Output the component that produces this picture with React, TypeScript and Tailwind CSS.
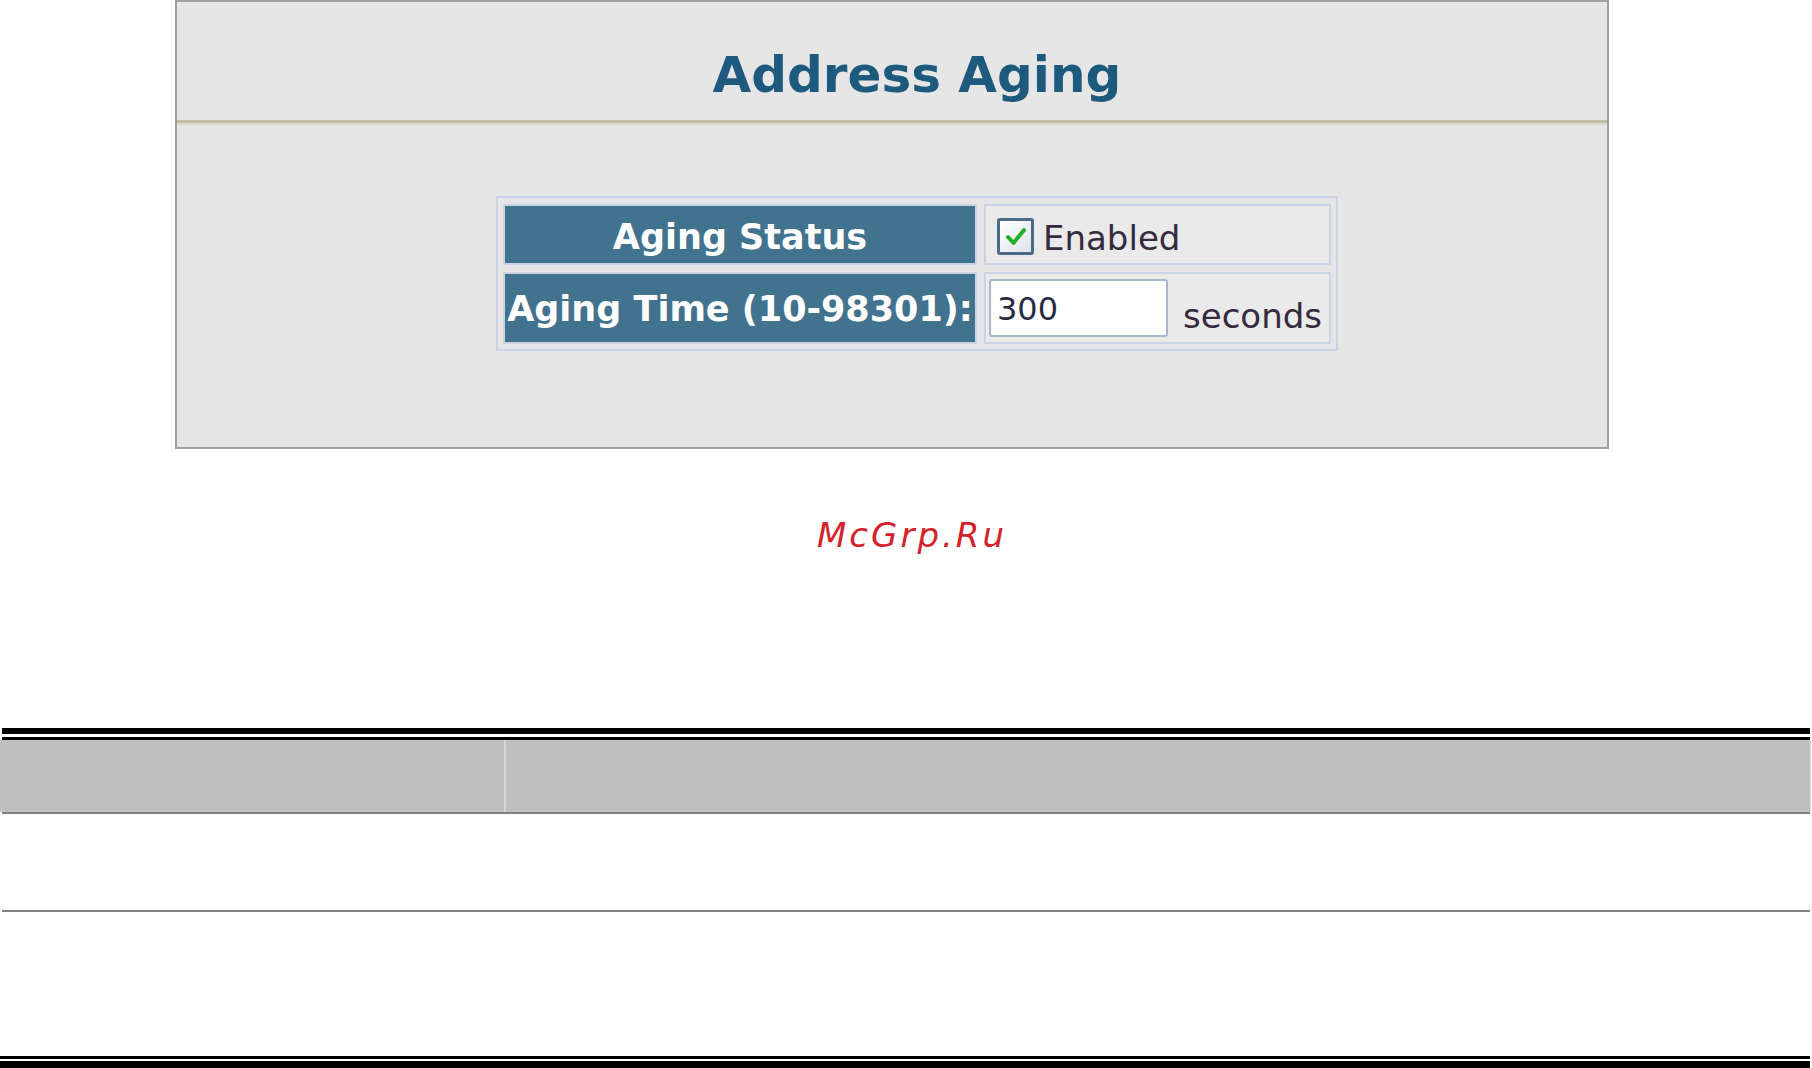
const font = "font-['DejaVu_Sans',Verdana,sans-serif]";

const CheckBox = () => (
  <div className="flex h-[37px] w-[37px] items-center justify-center rounded-[3px] border-[3px] border-[#4d6a88] bg-gradient-to-br from-white to-[#dfe3ea]">
    <svg width="22" height="20" viewBox="0 0 22 20">
      <path d="M3 10 L8.5 16 L19 3" fill="none" stroke="#23ad2a" strokeWidth="4" strokeLinecap="round" strokeLinejoin="round" />
    </svg>
  </div>
);

const AddressAging = () => {
  return (
    <div className={`ml-[175px] flex h-[449px] w-[1434px] flex-col border-2 border-[#a0a0a0] bg-[#e6e6e6] ${font}`}>
      <div className="pl-[50px] pt-[48px]">
        <h1 className="text-center text-[50px] font-bold leading-none text-[#1d5a7e]">Address Aging</h1>
      </div>
      <div className="mt-[20px] h-[5px] border-t-[3px] border-[#c2bea8] bg-[#dcd9c8]" />

      <div className="flex justify-center pl-[50px] pt-[71px]">
        <div className="grid grid-cols-[474px_347px] grid-rows-[61px_72px] gap-[7px] border-2 border-[#cad3e5] px-[5px] pb-[5px] pt-[6px]">
          <div className="flex items-center justify-center border-2 border-[#cbd4e5] bg-[#41728e] pt-[6px] text-[35px] font-bold text-white">
            Aging Status
          </div>
          <div className="flex items-center gap-[9px] border-2 border-[#cbd4e5] bg-[#eaeaea] pl-[11px] pt-[4px]">
            <CheckBox />
            <span className="pt-[4px] text-[34px] text-[#362b3e]">Enabled</span>
          </div>
          <div className="flex items-center justify-center whitespace-nowrap border-2 border-[#cbd4e5] bg-[#41728e] pt-[3px] text-[35px] font-bold text-white">
            Aging Time (10-98301):
          </div>
          <div className="flex items-center gap-[15px] border-2 border-[#cbd4e5] bg-[#eaeaea] pl-[3px]">
            <input
              readOnly
              defaultValue="300"
              className={`h-[58px] w-[179px] rounded-[3px] border-2 border-[#a9b7c8] bg-white px-[6px] pt-[2px] text-[32px] text-[#2a2a44] outline-none ${font}`}
            />
            <span className="pt-[16px] text-[34px] text-[#362b3e]">seconds</span>
          </div>
        </div>
      </div>
    </div>
  );
};

const ParamTable = () => (
  <div className="mt-[176px] flex flex-col">
    <div className="ml-[2px] h-[6px] w-[1808px] bg-black" />
    <div className="h-[3px]" />
    <div className="ml-[2px] h-[3px] w-[1808px] bg-black" />
    <div className="flex h-[72px] w-[1811px] bg-[#c0c0c0]">
      <div className="w-[506px] border-r-2 border-[#d6d6d6]" />
      <div className="flex-1 border-r border-[#dedede]" />
    </div>
    <div className="ml-[2px] h-[2px] w-[1808px] bg-[#808080]" />
    <div className="h-[96px]" />
    <div className="ml-[2px] h-[2px] w-[1808px] bg-[#808080]" />
    <div className="h-[144px]" />
    <div className="h-[3px] w-[1810px] bg-black" />
    <div className="h-[2px]" />
    <div className="h-[7px] w-[1810px] bg-black" />
  </div>
);

export default function App() {
  return (
    <div className="h-[1068px] w-[1812px] overflow-hidden bg-white">
      <AddressAging />
      <div className="mt-[69px] flex justify-center pl-[12px]">
        <span className={`text-[34px] italic leading-none tracking-[3px] text-[#d2232a] ${font}`}>McGrp.Ru</span>
      </div>
      <ParamTable />
    </div>
  );
}
